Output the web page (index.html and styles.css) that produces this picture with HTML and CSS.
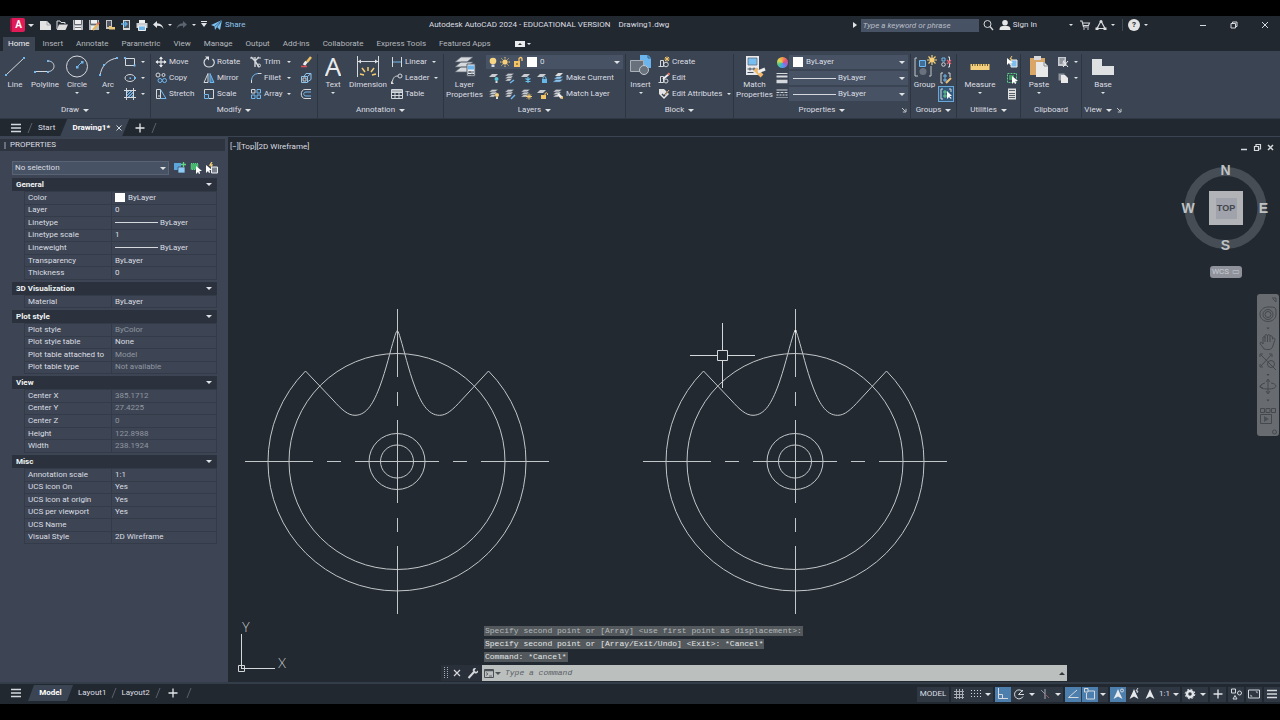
FILE: index.html
```html
<!DOCTYPE html>
<html lang="en">
<head>
<meta charset="utf-8">
<title>Autodesk AutoCAD 2024 - Drawing1.dwg</title>
<link rel="stylesheet" href="styles.css">
</head>
<body>
<svg class="defs" aria-hidden="true">
  <defs>
    <symbol id="stack" viewBox="0 0 12 12"><path d="M1 4l3-2.500h6L7 4zM1 6.500l3-2.500h5L7 6.500zM1 9l3-2.500h4L6 9z" fill="#c9cdd2" stroke="#4a515c" stroke-width=".4"/></symbol>
    <symbol id="menu" viewBox="0 0 12 12"><path d="M1 2.500h10M1 6h10M1 9.500h10" stroke="#d5d9de" stroke-width="1.600"/></symbol>
    <symbol id="plus" viewBox="0 0 12 12"><path d="M6 1.500v9M1.500 6h9" stroke="#e2e5e9" stroke-width="1.300"/></symbol>
    <symbol id="slash" viewBox="0 0 6 12"><path d="M5 1L1 11" stroke="#59616d" stroke-width="1"/></symbol>
    <symbol id="corner" viewBox="0 0 6 6"><path d="M1 1l3.500 3.500M5 1.800V5H1.800" stroke="#cdd1d6" stroke-width=".9"/></symbol>
    <symbol id="person" viewBox="0 0 12 12"><path d="M6 1l1.700 4L10.500 11 6 8.500 1.500 11 4.300 5z" fill="#e6e9ec"/></symbol>
    <g id="cam">
      <path d="M305.500 371A129 129 0 1 0 488.500 371"/>
      <circle cx="397" cy="461.500" r="108"/><circle cx="397" cy="461.500" r="28"/><circle cx="397" cy="461.500" r="16.500"/>
      <path d="M305.500 371L333 400C342 410 348 415.300 355 415.300C367 415.300 374 402 380 386C386 370 390.500 350 394 339Q396 331.500 397.300 330.500Q398.600 331.500 400.600 339C404 350 408.600 370 414.600 386C420.600 402 427.600 415.300 439.600 415.300C446.600 415.300 452.600 410 461.600 400L488.500 371"/>
      <path d="M245 461.500h68m14 0h14m14 0h84m14 0h14m14 0h68M397.500 309v68m0 15v14m0 14v83m0 15v14m0 14v68"/>
    </g>
  </defs>
</svg>

<header class="titlebar">
  <div class="quick">
    <button class="logo" aria-label="Application menu">A</button>
    <button class="tiny" aria-label="More"><i class="caret"></i></button>
    <button class="ic new" aria-label="New"><svg width="12" height="12"><path d="M0 2h7l4 4v5H0z" fill="#e3e3e3"/><path d="M7 2v4h4" stroke="#8b8f95" stroke-width=".7"/></svg></button>
    <button class="ic" aria-label="Open"><svg width="12" height="12"><path d="M1 10V2h3l1 1.500h4V5" stroke="#ddd"/><path d="M3 5.500h9L9.500 11H.8z" fill="#dedede"/></svg></button>
    <button class="ic" aria-label="Save"><svg width="12" height="12"><path d="M1 1h10v10H1z" fill="#b9bcc1"/><path d="M3 1h6v4H3zM3 7h6v4H3z" fill="#eee"/><path d="M2.500 1v4.500h7V1M3 8.500h6" stroke="#4e5560" stroke-width=".8"/></svg></button>
    <button class="ic" aria-label="Save as"><svg width="12" height="12"><path d="M1 1h10v10H1z" fill="#b9bcc1"/><path d="M3 1h6v3H3zM3 7h4v4H3z" fill="#eee"/><path d="M2.500 1v4.500h7V1" stroke="#4e5560" stroke-width=".8"/><path d="M5 11l5-6" stroke="#e8b55a" stroke-width="2"/><path d="M9.500 5.500l1.500-2" stroke="#e5674c" stroke-width="2"/></svg></button>
    <button class="ic" aria-label="Open from web"><svg width="12" height="12"><path d="M2 1h6v9H2z" fill="#c5c7ca"/><path d="M3 2h4v6H3z" fill="#545b66"/><path d="M5 10.500V7h2l1 1h3v2.500z" fill="#efc878"/></svg></button>
    <button class="ic" aria-label="Save to web"><svg width="12" height="12"><path d="M3 1h7v10H3z" fill="#d5d6d8"/><path d="M4 2h5v7H4z" fill="#49525f"/><path d="M1 5h5M4.500 2.500L7 5 4.500 7.500" stroke="#5fb0e8" stroke-width="1.300"/></svg></button>
    <button class="ic" aria-label="Plot"><svg width="12" height="12"><path d="M3 1h6v3H3z" fill="#eee"/><path d="M.5 4h11v5H.5z" fill="#c9ccd0"/><path d="M2.500 7h7v4.500h-7z" fill="#6fb6ec" stroke="#eee"/></svg></button>
    <button class="ic" aria-label="Undo"><svg width="12" height="12"><path d="M5 2L1 5.500 5 9V6.800C8 6.500 10 7.500 11.500 10 11 6.500 9 4.500 5 4.200z" fill="#e2e5e8"/></svg></button>
    <button class="tiny8" aria-label="Undo list"><i class="caret sm"></i></button>
    <button class="ic" aria-label="Redo"><svg width="12" height="12"><path d="M7 2l4 3.500L7 9V6.800C4 6.500 2 7.500.5 10 1 6.500 3 4.500 7 4.200z" fill="#5c6470"/></svg></button>
    <button class="tiny8" aria-label="Redo list"><i class="caret sm"></i></button>
    <button class="tiny" aria-label="Customize toolbar"><i class="caret bar"></i></button>
    <button class="share"><svg width="12" height="12"><path d="M0 6L11 1 9 11 6 8 4 11 3.500 7.500z" fill="#7cc0f0"/><path d="M3.500 7.500L11 1 6 8" stroke="#2a4f70" stroke-width=".7"/></svg>Share</button>
  </div>
  <h1 class="title"><span>Autodesk AutoCAD 2024 - EDUCATIONAL VERSION</span><span>Drawing1.dwg</span></h1>
  <div class="infocenter">
    <i class="caret right"></i>
    <input class="search" type="text" aria-label="Search" placeholder="Type a keyword or phrase">
    <button class="ic" aria-label="Search"><svg width="12" height="12"><circle cx="5.500" cy="5" r="3.500"/><path d="M8 7.500l3 3.500" stroke-width="1.300"/></svg></button>
    <button class="signin"><svg width="12" height="12"><circle cx="6" cy="3.700" r="2.800" fill="#e6e6e6"/><path d="M.5 11c0-4 2-4 5.500-4s5.500 0 5.500 4z" fill="#e6e6e6"/></svg>Sign In</button>
    <button class="tiny acct" aria-label="Account menu"><i class="caret sm"></i></button>
    <button class="ic" aria-label="App store"><svg width="12" height="12"><path d="M1 2h2l1.500 6H10M3.500 4H10.500L9.500 6.500H4" stroke-width="1.100"/><circle cx="5" cy="10" r=".8" fill="#ddd"/><circle cx="9" cy="10" r=".8" fill="#ddd"/></svg></button>
    <button class="ic" aria-label="Autodesk apps"><svg width="12" height="12"><path d="M6 2L2 9.500h8L6 2" stroke-width="1.200"/><circle cx="6" cy="2.500" r="1.500" fill="#ddd"/><path d="M.5 8.500h3v2.500h-3zM8.500 8.500h3v2.500h-3z" fill="#ddd"/></svg></button>
    <button class="tiny8" aria-label="Apps menu"><i class="caret sm"></i></button>
    <span class="vline"></span>
    <button class="help" aria-label="Help">?</button>
    <button class="tiny" aria-label="Help menu"><i class="caret sm"></i></button>
  </div>
  <div class="winbtns">
    <button aria-label="Minimize"><svg width="10" height="10"><path d="M2 5.500h6"/></svg></button>
    <button aria-label="Restore"><svg width="10" height="10"><path d="M2 3.500h4.500V8H2zM3.500 3V2H8v4.500H7"/></svg></button>
    <button aria-label="Close"><svg width="10" height="10"><path d="M2 2l6 6M8 2L2 8"/></svg></button>
  </div>
</header>

<nav class="tabs">
  <button class="active">Home</button><button>Insert</button><button>Annotate</button><button>Parametric</button><button>View</button><button>Manage</button><button>Output</button><button>Add-ins</button><button>Collaborate</button><button>Express Tools</button><button>Featured Apps</button>
  <button class="mini" aria-label="Minimize ribbon"><svg width="10" height="6"><path d="M0 0h10v6H0z" fill="#e9ebed"/><path d="M3 4l2-2 2 2z" fill="#333"/></svg><i class="caret sm"></i></button>
</nav>

<main class="ribbon">
  <section class="panel draw">
    <div class="body">
      <button class="big"><svg width="24" height="24"><path d="M3 21L21 4"/><path d="M2 20h2v2H2zM20 3h2v2h-2z" fill="#71b8f0"/></svg><span>Line</span></button>
      <button class="big"><svg width="24" height="24"><path d="M3 17.500h12M15 7c8 0 8 10.500 0 10.500"/><path d="M1 17h2v2H1zM14 6h2v2h-2zM14 17h2v2h-2z" fill="#71b8f0"/></svg><span>Polyline</span></button>
      <button class="big"><svg width="24" height="24"><circle cx="12" cy="12.500" r="10.500"/><path d="M12 13l5-5" stroke="#71b8f0"/><path d="M11 12h2.500v2.500H11zM16 7h2.500v2.500H16z" fill="#71b8f0"/></svg><span>Circle</span><i class="caret sm"></i></button>
      <button class="big"><svg width="24" height="24"><path d="M4 22C5 12 12 5 22 4"/><path d="M3 20h2v2H3zM7 10h2v2H7zM20 3h2v2h-2z" fill="#71b8f0"/></svg><span>Arc</span><i class="caret sm"></i></button>
      <div class="stack">
        <button aria-label="Rectangle"><svg width="12" height="12"><path d="M1.500 2.500h9v7h-9z"/><path d="M0 1h2v2H0zM9.500 8.500h2v2h-2z" fill="#71b8f0"/></svg><i class="caret sm"></i></button>
        <button aria-label="Ellipse"><svg width="12" height="12"><ellipse cx="6" cy="6" rx="5" ry="3.500"/><path d="M5.500 5.500h1.500v1.500H5.500zM10 5h2v2h-2z" fill="#71b8f0"/></svg><i class="caret sm"></i></button>
        <button aria-label="Hatch"><svg width="12" height="12"><path d="M2.500 0v12M9.500 0v12M0 2.500h12M0 9.500h12"/><path d="M3 3h6v6H3z" fill="#6aa5d6"/><path d="M3 6l3-3M3 9l6-6M6 9l3-3" stroke="#36404d"/></svg><i class="caret sm"></i></button>
      </div>
    </div>
    <button class="name">Draw<i class="caret"></i></button>
  </section>

  <section class="panel modify">
    <div class="body">
      <div class="stack">
        <button><svg width="12" height="12"><path d="M6 1v10M1 6h10" stroke-width="1.300"/><path d="M4 3l2-2.500L8 3zM4 9l2 2.500L8 9zM3 4L.5 6 3 8zM9 4l2.500 2L9 8z" fill="#e5e8eb"/></svg>Move</button>
        <button><svg width="12" height="12"><circle cx="3" cy="3" r="2"/><circle cx="8.500" cy="3" r="1.500"/><circle cx="5" cy="8.500" r="2" stroke="#71b8f0"/><circle cx="9.500" cy="8.500" r="2" stroke="#71b8f0"/></svg>Copy</button>
        <button><svg width="12" height="12"><path d="M1.500 1.500h4v9h-4z"/><path d="M5.500 1.500L11 10.500H5.500" stroke="#71b8f0"/><path d="M3 8h3"/></svg>Stretch</button>
      </div>
      <div class="stack">
        <button><svg width="12" height="12"><path d="M4 2C-1 5 1 11 6 11s7-5 3.500-8" stroke-width="1.200"/><path d="M2 .5h4v4z" fill="#e2e5e8"/></svg>Rotate</button>
        <button><svg width="12" height="12"><path d="M5 1.500V10.500H1z"/><path d="M7 1.500V10.500h4z" fill="#477aa7" stroke="#71b8f0"/></svg>Mirror</button>
        <button><svg width="12" height="12"><path d="M1.500 6V1.500h9v9H6"/><path d="M1.500 6.500h4v4h-4z" stroke="#71b8f0"/></svg>Scale</button>
      </div>
      <div class="stack carets">
        <button><svg width="12" height="12"><path d="M1 1l4 4M5 1v10M9 1L5 5l4 6" stroke-width="1.400"/><circle cx="9" cy="9.500" r="1.500"/><path d="M0 2h4M7 2h4" stroke="#c8cbd0"/></svg>Trim<i class="caret sm"></i></button>
        <button><svg width="12" height="12"><path d="M1.500 11V8" /><path d="M1.500 8C2 4 4 2 8 1.500" stroke="#71b8f0"/><path d="M8 1.500h3.500"/></svg>Fillet<i class="caret sm"></i></button>
        <button><svg width="12" height="12"><path d="M1.500 1.500h3.500V5H1.500z"/><path d="M7 1.500h3.500V5H7zM1.500 7H5v3.500H1.500zM7 7h3.500v3.500H7z" stroke="#71b8f0"/></svg>Array<i class="caret sm"></i></button>
      </div>
      <div class="stack">
        <button aria-label="Erase"><svg width="12" height="12"><path d="M11 1L7 6" stroke="#f0c064" stroke-width="2.500"/><path d="M6.500 5.500L4 9" stroke="#eee" stroke-width="3"/><path d="M1 10.500h6" stroke="#e05050" stroke-width="1.500"/></svg></button>
        <button aria-label="Explode"><svg width="12" height="12"><path d="M1.500 4.500h6v6h-6zM4 4.500l2-3h5v6l-3 2M7.500 4.500l3.500-3" stroke="#8fc4ee"/><path d="M3 6h3v3H3z" stroke="#c7cbd0"/></svg></button>
        <button aria-label="Offset"><svg width="12" height="12"><path d="M11 1.500H5c-5 0-5 9 0 9h6"/><path d="M11 4H6C3 4 3 8 6 8h5" stroke="#71b8f0"/></svg></button>
      </div>
    </div>
    <button class="name">Modify<i class="caret"></i></button>
  </section>

  <section class="panel annotation">
    <div class="body">
      <button class="big"><b class="glyph">A</b><span>Text</span><i class="caret sm"></i></button>
      <button class="big"><svg width="24" height="24"><path d="M1.500 2v21M22.500 2v21M2 7.500h20"/><path d="M2 7.500l3-2v4zM22 7.500l-3-2v4z" fill="#ddd"/><path d="M12 13v4M6 14l3 4M18 14l-3 4M4 20l4 1M20 20l-4 1" stroke="#f3cd72" stroke-width="1.500"/></svg><span>Dimension</span></button>
      <div class="stack">
        <button><svg width="12" height="12"><path d="M1.500 1v10M10.500 1v10"/><path d="M2 6h8" stroke="#71b8f0"/></svg>Linear<i class="caret sm"></i></button>
        <button><svg width="12" height="12"><path d="M1 11c1-5 2-7 6-7"/><circle cx="9" cy="4" r="2"/><path d="M0 9v3h3z" fill="#ddd"/></svg>Leader<i class="caret sm"></i></button>
        <button><svg width="12" height="12"><path d="M.5 1.500h11v9H.5zM.5 4.500h11M.5 7.500h11M4 4v6M8 4v6"/><path d="M1 3h10" stroke-width="1.500"/></svg>Table</button>
      </div>
    </div>
    <button class="name">Annotation<i class="caret"></i></button>
  </section>

  <section class="panel layers">
    <div class="body">
      <button class="big"><svg width="24" height="24"><path d="M2 8l6-5h12l-6 5zM2 13l6-5h12l-6 5zM2 18l6-5h12l-6 5z" fill="#d5d8dc" stroke="#59616d" stroke-width=".7"/><path d="M14 10h8v12h-8z" fill="#e9ebee" stroke="#56606c"/><path d="M15 11.500h6v4h-6z" fill="#6bb4ec"/><path d="M15 18h6M15 20.500h6M17 17v2M19 19.500v2" stroke="#46505c"/></svg><span>Layer<br>Properties</span></button>
      <div class="rows">
        <div class="combo">
          <svg width="46" height="12"><circle cx="6" cy="5" r="3.300" fill="#f6d684"/><path d="M4.500 8.500h3v2.500h-3z" fill="#d7d9dc"/><circle cx="18" cy="6" r="2.600" fill="#f6cf78"/><path d="M18 1v1.500M18 9.500V11M13 6h1.500M21.500 6H23M14.500 2.500l1 1M20.500 8.500l1 1M21.500 2.500l-1 1M15.500 8.500l-1 1" stroke="#f6cf78"/><path d="M27 5h6v6h-6z" fill="#f3c467"/><path d="M32 5V2.500q2-2 3 0V5" stroke="#f3c467" stroke-width="1.300"/><path d="M30 7v2" stroke="#5c4a20"/></svg>
          <span class="swatch"></span>
          <select aria-label="Layer"><option>0</option></select><i class="caret"></i>
        </div>
        <div class="irow">
          <button aria-label="Off"><svg width="12" height="12"><path d="M1 5l3-3h6L7 5z" fill="#c9cdd2"/><circle cx="8.500" cy="7" r="2" fill="#59c8d8"/><path d="M7.500 9h2v2h-2z" fill="#ddd"/></svg></button>
          <button aria-label="Isolate"><svg width="12" height="12"><use href="#stack"/><path d="M6 11l4-3" stroke="#71b8f0" stroke-width="1.500"/></svg></button>
          <button aria-label="Freeze"><svg width="12" height="12"><path d="M1 5l3-3h6L7 5z" fill="#c9cdd2"/><path d="M8 5v6M5.500 6.500l5 3M10.500 6.500l-5 3" stroke="#67c1e8" stroke-width="1.200"/></svg></button>
          <button aria-label="Lock"><svg width="12" height="12"><path d="M1 5l3-3h6L7 5z" fill="#c9cdd2"/><path d="M6 7h5v4H6z" fill="#67b8e8"/><path d="M7 7V5.500q1.500-1.500 3 0V7" stroke="#67b8e8"/></svg></button>
          <button><svg width="12" height="12"><path d="M3 4l3-3h5L8 4z" fill="#ddd"/><path d="M2 7l3-2.500h6L8 7zM1 10l3-2.500h7L8 10z" fill="#8cc5ee" stroke="#49647c" stroke-width=".5"/></svg>Make Current</button>
        </div>
        <div class="irow">
          <button aria-label="Turn all on"><svg width="12" height="12"><use href="#stack"/><circle cx="9" cy="7" r="2" fill="#f6cf78"/><path d="M8 9h2v2H8z" fill="#ddd"/></svg></button>
          <button aria-label="Unisolate"><svg width="12" height="12"><use href="#stack"/><path d="M7 11l4-4" stroke="#71b8f0" stroke-width="1.500"/></svg></button>
          <button aria-label="Thaw"><svg width="12" height="12"><use href="#stack"/><path d="M9 5.500v6M6 8.500h6M7 6.500l4 4M11 6.500l-4 4" stroke="#f6cf78"/></svg></button>
          <button aria-label="Unlock"><svg width="12" height="12"><path d="M1 5l3-3h6L7 5z" fill="#c9cdd2"/><path d="M5 7h5v4H5z" fill="#f3c467"/><path d="M9 7V5.500q1.500-1.500 2.500 0V7" stroke="#f3c467"/></svg></button>
          <button><svg width="12" height="12"><use href="#stack"/><path d="M6 6l4 4" stroke="#eee" stroke-width="2.500"/><path d="M8 10l3-2v3z" fill="#f3c467"/></svg>Match Layer</button>
        </div>
      </div>
    </div>
    <button class="name">Layers<i class="caret"></i></button>
  </section>

  <section class="panel block">
    <div class="body">
      <button class="big"><svg width="24" height="24"><path d="M11 1h8l3 3v10H11z" fill="#6bb4ec"/><path d="M19 1v3h3" stroke="#2d5e88"/><path d="M1.500 6.500h13v11h-13z" fill="#69717d" stroke="#aab0b8"/><circle cx="15" cy="16" r="4.500" fill="#69717d" stroke="#c3c8ce"/></svg><span>Insert</span><i class="caret sm"></i></button>
      <div class="stack">
        <button><svg width="12" height="12"><path d="M.5 10.500h5v-6h-3v6"/><circle cx="8" cy="8.500" r="2.300"/><path d="M9 .5v5M6.500 3h5M7 1l4 4M11 1L7 5" stroke="#f3c467"/></svg>Create</button>
        <button><svg width="12" height="12"><path d="M.5 10.500h5v-6h-3v6"/><circle cx="8" cy="9" r="2"/><path d="M5 7l6-5" stroke="#eee" stroke-width="1.800"/><path d="M10 3l1.500-2" stroke="#e87460" stroke-width="2"/></svg>Edit</button>
        <button><svg width="12" height="12"><path d="M1 1h5l5 5-5 5-5-5z" fill="#e4e4e4"/><path d="M4 6l2 2 5-6" stroke="#3b4453" stroke-width="1.500"/><path d="M7 7l4-5" stroke="#e8b070"/></svg>Edit Attributes<i class="caret sm"></i></button>
      </div>
    </div>
    <button class="name">Block<i class="caret"></i></button>
  </section>

  <section class="panel props">
    <div class="body">
      <button class="big"><svg width="24" height="24"><path d="M3 2h13v19H3z" fill="#e8e9ec"/><path d="M5 4h9v7H5z" fill="#78bdf0" stroke="#56616d" stroke-width=".7"/><path d="M4.500 15h10M4.500 18.500h6M7 13.500v3M11 13.500v3" stroke="#46505c"/><path d="M12 15l7 7" stroke="#f0b868" stroke-width="4"/><path d="M15 18l7-3" stroke="#eee" stroke-width="3"/></svg><span>Match<br>Properties</span></button>
      <div class="stack center">
        <button aria-label="Object color"><span class="wheel"></span></button>
        <button aria-label="Lineweight"><svg width="12" height="12"><path d="M.5 1.500h11"/><path d="M.5 4.500h11" stroke-width="2"/><path d="M.5 9.500h11" stroke-width="3.500"/></svg></button>
        <button aria-label="Linetype"><svg width="12" height="12"><path d="M.5 2h11"/><path d="M.5 4.500h11" stroke-dasharray="3 1"/><path d="M.5 7h11" stroke-dasharray="2 1"/><path d="M.5 9.500h11" stroke-dasharray="1 1"/></svg></button>
      </div>
      <div class="rows">
        <div class="combo"><span class="swatch"></span><select aria-label="Color"><option>ByLayer</option></select><i class="caret"></i></div>
        <div class="combo"><span class="rule"></span><select aria-label="Lineweight"><option>ByLayer</option></select><i class="caret"></i></div>
        <div class="combo"><span class="rule"></span><select aria-label="Linetype"><option>ByLayer</option></select><i class="caret"></i></div>
      </div>
    </div>
    <button class="name">Properties<i class="caret"></i><svg class="launch" width="6" height="6"><use href="#corner"/></svg></button>
  </section>

  <section class="panel groups">
    <div class="body">
      <button class="big"><svg width="24" height="24"><path d="M4 4H2v18h3M16 4h1M16 22h2V12" stroke="#c2c7cd"/><path d="M6.500 6.500h6v6h-6z" fill="#3f6e96" stroke="#71b8f0"/><circle cx="10" cy="17.500" r="3.500" fill="#6a727e"/><path d="M19 1v10M14 6h10M15.500 2.500l7 7M22.500 2.500l-7 7" stroke="#f6cf78" stroke-width="1.200"/><circle cx="19" cy="6" r="2.300" fill="#f6cf78"/></svg><span>Group</span></button>
      <div class="stack center">
        <button aria-label="Ungroup"><svg width="12" height="12"><path d="M2 2h3v3H2z" stroke="#71b8f0"/><circle cx="3.500" cy="8.500" r="1.800"/><path d="M8 1h1.500v10H8"/><path d="M7 4l4 4M11 4L7 8" stroke="#e5606c" stroke-width="1.200"/></svg></button>
        <button aria-label="Group edit"><svg width="12" height="12"><path d="M3 1H1v10h2M8 1h2v4"/><path d="M4 3h2v2H4zM4 7h2v2H4z" stroke="#71b8f0"/><path d="M6 11l5-5" stroke="#f0c27a" stroke-width="2"/></svg></button>
        <button class="on" aria-label="Group selection"><svg width="12" height="12"><path d="M3 1H1v10h2M9 1h2v3"/><path d="M4 3h2v2H4zM4 7h2v2H4z" stroke="#5fd08b"/><path d="M7 3v8l2-2 2 2 .5-1L9.500 8H12z" fill="#fff"/></svg></button>
      </div>
    </div>
    <button class="name">Groups<i class="caret"></i></button>
  </section>

  <section class="panel utilities">
    <div class="body">
      <button class="big"><svg width="24" height="24"><path d="M2.500 10h19v6h-19z" fill="#f3cf7d"/><path d="M4.500 10v2M7 10v2M9.500 10v2M12 10v2M14.500 10v2M17 10v2M19.500 10v2" stroke="#6a5a34"/></svg><span>Measure</span><i class="caret sm"></i></button>
      <div class="stack center">
        <button aria-label="Quick select"><svg width="12" height="12"><path d="M5 4h6v7H5z" fill="#7fbdec" stroke="#eee"/><path d="M1 2v7l2-2 1 2 1-.5L4.500 7H7z" fill="#fff"/><path d="M6 0L4 3h2L5 5" stroke="#f6cf78"/></svg></button>
        <button aria-label="Select all"><svg width="12" height="12"><path d="M1.500 1.500h9v9h-9z" stroke="#5fd08b" stroke-dasharray="2 1"/><path d="M3 3h5v5H3z" fill="#3f9a62"/><path d="M6 4v8l2-2 1 2 1-.5L9.500 9H12z" fill="#fff"/></svg></button>
        <button aria-label="Calculator"><svg width="12" height="12"><path d="M2 .5h8v11H2z" fill="#dedede"/><path d="M3 2.500h6M3 5.500h6M3 7.500h6M3 9.500h6" stroke="#59616d"/></svg></button>
      </div>
    </div>
    <button class="name">Utilities<i class="caret"></i></button>
  </section>

  <section class="panel clipboard">
    <div class="body">
      <button class="big"><svg width="24" height="24"><path d="M3 4h15v17H3z" fill="#d9a668"/><path d="M7 2h7v4H7z" fill="#d7d9dc"/><path d="M9 8h8l4 4v11H9z" fill="#e9e9e9"/><path d="M17 8v4h4" stroke="#8d9197"/></svg><span>Paste</span><i class="caret sm"></i></button>
      <div class="stack clips">
        <button aria-label="Cut"><svg width="12" height="12"><path d="M1 1h8v9H1z" fill="#c7cad0"/><path d="M2.500 3h5M2.500 5h4M2.500 7h3" stroke="#59616d"/><path d="M6 5l5 6M11 5l-5 6" stroke="#eee"/></svg><i class="caret sm"></i></button>
        <button aria-label="Copy clip"><svg width="12" height="12"><path d="M1.500 1.500h6v7h-6z" fill="#8f959e"/><path d="M4 3h4l3 3v5H4z" fill="#e9e9e9"/></svg><i class="caret sm"></i></button>
      </div>
    </div>
    <div class="name">Clipboard</div>
  </section>

  <section class="panel view">
    <div class="body">
      <button class="big"><svg width="24" height="24"><path d="M1 5h10v7h12v9H1z" fill="#dfe0e2"/></svg><span>Base</span><i class="caret sm"></i></button>
    </div>
    <button class="name">View<i class="caret"></i><svg width="6" height="6"><use href="#corner"/></svg></button>
  </section>
</main>

<nav class="files">
  <button class="ic" aria-label="Menu"><svg width="12" height="12"><use href="#menu"/></svg></button>
  <svg class="slash" width="6" height="12"><use href="#slash"/></svg>
  <button class="start">Start</button>
  <button class="doc">Drawing1*<svg width="8" height="8"><path d="M1.500 1.500l5 5M6.500 1.500l-5 5"/></svg></button>
  <button class="ic add" aria-label="New drawing"><svg width="12" height="12"><use href="#plus"/></svg></button>
  <svg width="6" height="12"><use href="#slash"/></svg>
</nav>

<div class="work">
  <aside class="palette">
    <h2>PROPERTIES</h2>
    <div class="pick">
      <div class="combo"><select aria-label="Selection"><option>No selection</option></select><i class="caret"></i></div>
      <button aria-label="Toggle PICKADD"><svg width="12" height="12"><path d="M0 1h7v7H0z" fill="#5aa6dd"/><path d="M4 5h7v6H4z" fill="#8dcaf5" stroke="#3b4453" stroke-width=".7"/><path d="M9.500 0v5M7 2.500h5" stroke="#5fd97f" stroke-width="1.300"/></svg></button>
      <button aria-label="Select objects"><svg width="12" height="12"><path d="M1 1.500h7v6H1z" fill="#49b86f" stroke="#5fd08b" stroke-dasharray="1 1"/><path d="M6 4v8l2-2 1 2 1-.5L9.500 9H12z" fill="#fff"/></svg></button>
      <button aria-label="Quick select"><svg width="12" height="12"><path d="M5.500 5h6v6h-6z" fill="#7a828e" stroke="#eee"/><path d="M0 3v8l2-2 1 2 1-.5L3.500 8H6z" fill="#fff"/><path d="M6 0L4 3h2L5 5" stroke="#f6cf78" stroke-width="1.300"/></svg></button>
    </div>
    <h3>General<i class="caret"></i></h3>
    <table class="r7">
      <tr><th>Color</th><td><span class="swatch"></span>ByLayer</td></tr>
      <tr><th>Layer</th><td>0</td></tr>
      <tr><th>Linetype</th><td><span class="rule"></span>ByLayer</td></tr>
      <tr><th>Linetype scale</th><td>1</td></tr>
      <tr><th>Lineweight</th><td><span class="rule"></span>ByLayer</td></tr>
      <tr><th>Transparency</th><td>ByLayer</td></tr>
      <tr><th>Thickness</th><td>0</td></tr>
    </table>
    <h3>3D Visualization<i class="caret"></i></h3>
    <table class="r1"><tr><th>Material</th><td>ByLayer</td></tr></table>
    <h3>Plot style<i class="caret"></i></h3>
    <table class="r4">
      <tr><th>Plot style</th><td class="dim">ByColor</td></tr>
      <tr><th>Plot style table</th><td>None</td></tr>
      <tr><th>Plot table attached to</th><td class="dim">Model</td></tr>
      <tr><th>Plot table type</th><td class="dim">Not available</td></tr>
    </table>
    <h3>View<i class="caret"></i></h3>
    <table class="r5">
      <tr><th>Center X</th><td class="dim">385.1712</td></tr>
      <tr><th>Center Y</th><td class="dim">27.4225</td></tr>
      <tr><th>Center Z</th><td class="dim">0</td></tr>
      <tr><th>Height</th><td class="dim">122.8988</td></tr>
      <tr><th>Width</th><td class="dim">238.1924</td></tr>
    </table>
    <h3>Misc<i class="caret"></i></h3>
    <table class="r6">
      <tr><th>Annotation scale</th><td>1:1</td></tr>
      <tr><th>UCS icon On</th><td>Yes</td></tr>
      <tr><th>UCS icon at origin</th><td>Yes</td></tr>
      <tr><th>UCS per viewport</th><td>Yes</td></tr>
      <tr><th>UCS Name</th><td></td></tr>
      <tr><th>Visual Style</th><td>2D Wireframe</td></tr>
    </table>
  </aside>

  <div class="canvas">
    <svg class="drawing" width="1052" height="545" viewBox="228 137 1052 545">
      <g stroke="#c3c7ca" stroke-width="1">
        <use href="#cam"/><use href="#cam" x="398"/>
      </g>
      <path d="M794.500 330h2v2h-2z" fill="#fff" stroke="none"/>
      <path d="M690 355.500h27M728 355.500h27M722.500 323v27M722.500 361v27M717.500 350.500h10v10h-10z" stroke="#d5d8da"/>
    </svg>
    <svg class="ucs" width="60" height="60"><path d="M5.500 15v34M5 49.500h34M2.500 46.500h6v6h-6z" stroke="#d5d8da"/><text x="6" y="13">Y</text><text x="42" y="49">X</text></svg>
    <div class="viewhead">
      <span>[−][Top][2D Wireframe]</span>
      <div>
        <button aria-label="Minimize drawing"><svg width="9" height="9"><path d="M1 6.500h6" stroke-width="1.500"/></svg></button>
        <button aria-label="Restore drawing"><svg width="9" height="9"><path d="M1.500 3.500h4v4h-4zM3 3V1.500h4.500V6H6" stroke-width="1.200"/></svg></button>
        <button aria-label="Close drawing"><svg width="9" height="9"><path d="M2 2l5 5M7 2L2 7" stroke-width="1.500"/></svg></button>
      </div>
    </div>
    <div class="cube">
      <svg width="90" height="90"><circle cx="44.500" cy="45" r="36.500" stroke="#474d54" stroke-width="9"/><path d="M28 28h34v34H28z" fill="#b1b3b7"/><path d="M35 35h21v21H35z" fill="#a0a3ab"/>
        <text x="44.500" y="12">N</text><text x="44.500" y="87">S</text><text x="7" y="50">W</text><text x="82.500" y="50">E</text><text class="top" x="45" y="48">TOP</text></svg>
      <button class="wcs">WCS<span>▭</span></button>
    </div>
    <svg class="navbar" width="22" height="142">
      <path d="M15 4h4v4M16 5l3 3"/>
      <path d="M11 13c8 0 8 0 8 7 0 10-16 10-16 0 0-4 4-7 8-7z"/><circle cx="11" cy="20.500" r="5"/><circle cx="11" cy="20.500" r="3"/>
      <path d="M9.500 33.500h3l-1.500 2z" fill="#3f4449"/>
      <path d="M7 55c-2-3-4-5-4-6s2-1 3 1v-6c0-2 2-2 2 0v-2c0-2 2-2 2.500 0 .5-2 2.500-2 2.500 0 1-1 2.500 0 2.500 2v1c2-2 3 0 2 2l-2 6c-1 3-5 3-8.500 2M8 44v4M10.500 42v6M13 42v6"/>
      <path d="M4 61l12 12M14 61L4 72M3 60h3M3 60v3M15 60h-3M15 60v3M3 73h3M3 73v-3"/><circle cx="14" cy="70" r="3.500"/><path d="M16 73l3 3"/>
      <path d="M9.500 80h3l-1.500 2z" fill="#3f4449"/>
      <path d="M11 86v13M9 88l2-3 2 3M9 97l2 3 2-3M8 89c-7 2-7 6 3 6s10-5 3-6M5 90l-2 3 3 1"/>
      <path d="M9.500 105.500h3l-1.500 2z" fill="#3f4449"/>
      <path d="M3.500 114.500h4v4h-4zM9 114.500h4v4H9zM14.500 114.500h4v4h-4zM3.500 120.500h11v9h-11z"/><path d="M7 122l5 3-5 3z" fill="#4a4f55"/>
      <circle cx="17.500" cy="138" r="2"/>
    </svg>
    <div class="command">
      <ul><li>Specify second point or [Array] &lt;use first point as displacement&gt;:</li><li>Specify second point or [Array/Exit/Undo] &lt;Exit&gt;: *Cancel*</li><li>Command: *Cancel*</li></ul>
      <div class="cmdbar">
        <svg class="grip" width="6" height="12"><path d="M1.500 0v12M4.500 0v12" stroke="#a8adb3" stroke-dasharray="1 1"/></svg>
        <button aria-label="Close command line"><svg width="8" height="8"><path d="M1 1l6 6M7 1L1 7" stroke-width="1.200"/></svg></button>
        <button aria-label="Customize"><svg width="12" height="12"><path d="M1.500 11L7 5" stroke-width="2"/><path d="M11 3.500L9 5 7.500 3.500 9 1.200C6.500.5 5 2.500 6 4.500L8 6.500c2 .5 3.500-1 3-3z" fill="#d5d8dc" stroke="none"/></svg></button>
        <div class="entry">
          <svg width="10" height="9"><path d="M.5.5h9v8h-9z"/><path d="M.5 1.500h9" stroke-width="1.500"/><path d="M2 3.500l2 1.500-2 1.500M5 7h3" stroke-width=".8"/></svg><i class="caret"></i>
          <input type="text" aria-label="Command" placeholder="Type a command"><i class="caret up"></i>
        </div>
      </div>
    </div>
  </div>
</div>

<footer class="status">
  <nav class="layouts">
    <button class="ic" aria-label="Layout menu"><svg width="12" height="12"><use href="#menu"/></svg></button>
    <button class="model">Model</button>
    <button>Layout1</button><svg width="6" height="12"><use href="#slash"/></svg>
    <button>Layout2</button><svg width="6" height="12"><use href="#slash"/></svg>
    <button class="ic" aria-label="New layout"><svg width="12" height="12"><use href="#plus"/></svg></button><svg width="6" height="12"><use href="#slash"/></svg>
  </nav>
  <div class="toggles">
    <button class="text">MODEL</button>
    <div class="set"><button aria-label="Grid"><svg width="12" height="12"><path d="M3.500 1v10M6.500 1v10M9.500 1v10M1 3.500h10M1 6.500h10M1 9.500h10" stroke="#a9aeb5"/></svg></button><button aria-label="Snap"><svg width="12" height="12"><path d="M2.500 2v9M5.500 2v9M8.500 2v9M11.500 2v9" stroke-dasharray="1 2"/></svg></button><button class="c" aria-label="Snap settings"><i class="caret"></i></button></div>
    <div class="set"><button class="on" aria-label="Ortho"><svg width="12" height="12"><path d="M1.500 0v10.500H11M1.500 6.500h4v4"/></svg></button><button aria-label="Polar"><svg width="12" height="12"><path d="M9.500 3.500A4.500 4.500 0 1 0 10 8.500M5.500 6.500L10 2M5.500 6.500h5.500"/></svg></button><button class="c" aria-label="Polar settings"><i class="caret"></i></button><button aria-label="Isodraft"><svg width="12" height="12"><path d="M6 1v10" stroke="#a9aeb5"/><path d="M2 2l4 4" stroke="#8e959e"/><path d="M6 6l4 4" stroke="#9a5563"/></svg></button><button class="c" aria-label="Isodraft settings"><i class="caret"></i></button></div>
    <div class="set"><button class="on" aria-label="Snap tracking"><svg width="12" height="12"><path d="M10 2L1.500 9.500H11.500"/></svg></button><button class="on" aria-label="Object snap"><svg width="12" height="12"><path d="M4 3h6.500v8h-8V5"/><path d="M.5.5h3.500v3.500H.5z"/></svg></button><button class="c" aria-label="Object snap settings"><i class="caret"></i></button></div>
    <div class="set"><button class="on" aria-label="Annotation visibility"><svg width="12" height="12"><use href="#person"/><circle cx="10" cy="2.500" r="1.500"/></svg></button><button aria-label="Auto scale"><svg width="12" height="12"><use href="#person"/><path d="M10 0L8 3h2L9 5"/></svg></button><button aria-label="Annotation scale icon"><svg width="12" height="12"><use href="#person"/></svg></button><button class="scale">1:1<i class="caret"></i></button></div>
    <div class="set"><button aria-label="Workspace"><svg width="12" height="12"><circle cx="6" cy="6" r="3" stroke-width="2.500" stroke="#e2e5e8"/><circle cx="6" cy="6" r="4.800" stroke="#e2e5e8" stroke-dasharray="2 1.770"/></svg></button><button class="c" aria-label="Workspace menu"><i class="caret"></i></button></div>
    <div class="set"><button aria-label="Annotation monitor"><svg width="12" height="12"><use href="#plus"/></svg></button></div>
    <div class="set"><button aria-label="Isolate objects"><svg width="12" height="12"><path d="M1.500 1h4v4h-4zM3 11l2-3.500L7 11z"/><circle cx="9.500" cy="5" r="2"/></svg></button></div>
    <div class="set"><button aria-label="Clean screen"><svg width="12" height="12"><path d="M.5 2h11v8H.5z"/><path d="M2.500 8.500v-2l2 2zM9.500 3.500v2l-2-2z" fill="#ddd"/></svg></button></div>
    <div class="set"><button aria-label="Customization"><svg width="12" height="12"><use href="#menu"/></svg></button></div>
  </div>
</footer>
</body>
</html>
```
FILE: styles.css
```css
* { box-sizing: border-box; }
:root {
  --dark: #222830;
  --panel: #3b4453;
  --field: #475264;
  --line: #2b323d;
  --text: #dcdee2;
}
html { background: #000; }
body {
  margin: 0;
  padding: 16px 0;
  height: 100vh;
  display: flex;
  flex-direction: column;
  overflow: hidden;
  background: #000;
  color: var(--text);
  font: 8px/10px Roboto, "Noto Sans", sans-serif;
}
button, select, input { font: inherit; color: inherit; background: none; border: 0; padding: 0; margin: 0; border-radius: 0; }
button { display: flex; align-items: center; justify-content: center; white-space: nowrap; }
select { appearance: none; flex: 1; min-width: 0; }
svg { display: block; flex: none; fill: none; stroke: #d5d8dc; }
svg [fill]:not([stroke]) { stroke: none; }
.defs { position: absolute; width: 0; height: 0; }

.caret { flex: none; width: 0; height: 0; border: 3px solid transparent; border-top-color: #e0e3e6; border-bottom: 0; }
.caret.sm { border-width: 2px; border-bottom: 0; }
.caret.up { border-top: 0; border-bottom: 3px solid #33383d; }
.caret.right { border: 3px solid transparent; border-left: 4px solid #e0e3e6; border-right: 0; }
.caret.bar { position: relative; border-top-width: 4px; }
.caret.bar::before { content: ""; position: absolute; left: -3px; top: -6px; width: 6px; height: 1px; background: #e0e3e6; }

/* title bar */
.titlebar { flex: none; height: 18px; display: flex; align-items: center; background: var(--dark); }
.quick, .infocenter, .winbtns { display: flex; align-items: center; }
.ic { width: 16px; height: 16px; }
.tiny { width: 12px; height: 16px; }
.tiny8 { width: 8px; height: 16px; }
.logo { width: 15px; height: 14px; margin-left: 10px; background: #e11b58; border-left: 2px solid #9d1440; border-radius: 2px; color: #fff; font-weight: 700; font-size: 10px; }
.new { margin-left: 1px; }
.share { gap: 2px; padding-left: 1px; color: #8fc6ee; }
.title { flex: 1; display: flex; justify-content: center; gap: 8px; margin: 0; font-size: 8px; font-weight: 400; white-space: nowrap; }
.search { width: 118px; height: 13px; margin: 0 1px 0 4px; padding: 0 2px; background: var(--field); font-style: italic; }
.search::placeholder { color: #b9bec6; opacity: 1; }
.signin { gap: 2px; margin-left: 3px; }
.acct { margin-left: 28px; }
.vline { width: 1px; height: 12px; margin: 0 5px; background: #414955; }
.help { width: 12px; height: 12px; border-radius: 6px; background: #e3e3e3; color: #222830; font-weight: 700; }
.winbtns { margin-left: 35px; }
.winbtns button { width: 31px; height: 16px; }

/* ribbon tabs */
.tabs { flex: none; display: flex; gap: 3px; padding: 3px 3px 0; background: var(--dark); }
.tabs button { height: 14px; padding: 0 5px; color: #b4b8be; }
.tabs .active { background: var(--panel); color: #f0f2f4; }
.tabs .mini { gap: 2px; margin-left: 11px; }

/* ribbon */
.ribbon { flex: none; display: flex; height: 68px; padding-top: 3px; background: var(--panel); border-bottom: 1px solid #303845; }
.panel { display: flex; flex-direction: column; border-right: 1px solid #2d3541; }
.view { border: 0; }
.body { flex: none; display: grid; height: 48px; }
.name { flex: none; height: 16px; gap: 4px; display: flex; align-items: center; justify-content: center; position: relative; }
.launch { position: absolute; right: 3px; }
.draw .body { grid-template-columns: 30px 30px 34px 28px 28px; }
.modify .body { grid-template-columns: 48px 47px 50px 17px; padding-left: 4px; }
.annotation .body { grid-template-columns: 30px 40px 55px; }
.layers .body { grid-template-columns: 41px 138px; padding-right: 2px; }
.block .body { grid-template-columns: 29px 78px; }
.props .body { grid-template-columns: 41px 14px 119px; padding-right: 2px; }
.groups .body { grid-template-columns: 27px 16px; padding-right: 2px; }
.utilities .body { grid-template-columns: 46px 17px; }
.clipboard .body { grid-template-columns: 36px 24px; }
.view .body { grid-template-columns: 42px; }
.big { flex-direction: column; justify-content: flex-start; line-height: 10px; }
.big > svg, .glyph { height: 24px; margin-bottom: 2px; }
.big .caret { margin-top: 2px; }
.glyph { overflow: hidden; font: 26px/24px "Noto Sans", sans-serif; color: #e8eaec; }
.stack { display: grid; grid-auto-rows: 16px; }
.stack button, .irow button { justify-content: flex-start; gap: 2px; }
.stack.center button { justify-content: center; }
.stack .caret { margin-left: 3px; }
.carets { padding-right: 9px; }
.carets .caret { margin-left: auto; }
.annotation .stack, .block .stack { padding-left: 3px; }
.draw .stack { padding-left: 2px; }
.on { background: #4c7fae; }
.stack .on { background: #35597b; border: 1px solid #6ba6d8; }
.rows { display: grid; grid-template-rows: repeat(3, 16px); align-items: center; }
.irow { display: flex; gap: 4px; }
.combo { display: flex; align-items: center; height: 14px; padding: 0 3px; background: var(--field); }
.layers .combo { padding-left: 1px; gap: 0; margin-left: 1px; }
.layers .combo svg { width: 39px; }
.layers .irow { padding-left: 3px; }
.swatch { flex: none; width: 10px; height: 10px; margin: 0 3px 0 1px; background: #fff; }
.rule { flex: none; width: 43px; height: 1px; margin: 0 2px 0 1px; background: #d5d8dc; }
.wheel { width: 11px; height: 11px; border-radius: 6px; background: conic-gradient(#f29a4a, #e5527a, #9466d6, #4c9cf0, #4cc98a, #e2d84c, #f29a4a); }

/* drawing file tabs */
.files { flex: none; height: 19px; display: flex; align-items: center; padding: 0 8px; background: var(--dark); border-bottom: 2px solid var(--panel); }
.files .slash { margin-left: 3px; }
.start { margin: 0 5px; }
.doc { height: 17px; gap: 5px; padding: 0 5px 0 11px; width: 69px; background: var(--panel); clip-path: polygon(7px 0, 100% 0, 62px 100%, 0 100%); font-weight: 700; color: #fff; }
.add { margin: 0 3px 0 3px; }

/* work area */
.work { flex: 1; min-height: 0; display: flex; margin-top: -1px; background: var(--dark); border-bottom: 2px solid #333c49; }
.palette { flex: none; width: 228px; padding: 2px 11px 0 12px; background: #3d4554; }
.palette h2 { margin: 0 -8px 10px -12px; padding: 0 10px; height: 12px; font: 8px/12px Roboto, sans-serif; background: #2e3540; position: relative; }
.palette h2::before { content: ""; position: absolute; left: 4px; top: 3px; width: 2px; height: 7px; background: #69717d; }
.pick { display: flex; align-items: center; height: 14px; gap: 4px; margin-bottom: 3px; }
.pick .combo { width: 157px; padding: 0 2px; border: 1px solid #586376; margin-right: 1px; flex: none; }
.palette h3 { display: flex; align-items: center; justify-content: space-between; height: 13px; margin: 0; padding: 0 5px 0 4px; font-size: 8px; line-height: 13px; font-weight: 700; color: #f0f2f4; background: var(--line); }
.palette table { width: 193px; margin: 0 0 2px 12px; border-collapse: collapse; table-layout: fixed; }
.palette th, .palette td { padding: 0 3px; height: 12px; line-height: 10px; text-align: left; vertical-align: middle; font-weight: 400; border: 1px solid #333b48; }
.palette th { width: 87px; white-space: nowrap; }
.palette td .swatch, .palette td .rule { display: inline-block; vertical-align: middle; margin-left: 0; }
.palette td .swatch { height: 9px; }
.r7 { height: 89px; }
.r1 { height: 13px; }
.r4 { height: 51px; }
.r5 { height: 64px; }
.r6 { height: 76px; }
.dim { color: #9097a1; }

/* drawing canvas and its overlays */
.canvas { flex: 1; min-width: 0; position: relative; overflow: hidden; background: #222930; }
.drawing { position: absolute; left: 0; top: 0; }
.ucs { position: absolute; left: 8px; bottom: 3px; }
.ucs text { font: 13px Lato, sans-serif; font-weight: 300; fill: #c9cccf; stroke: none; }
.viewhead { position: relative; display: flex; justify-content: space-between; padding: 5px 5px 0 2px; }
.viewhead div { display: flex; gap: 4px; }
.cube { position: absolute; right: 9px; top: 26px; width: 90px; }
.cube text { font: 700 14px "Liberation Sans", sans-serif; fill: #bfc2c5; stroke: none; text-anchor: middle; }
.cube .top { font-size: 9px; fill: #42464d; }
.wcs { width: 32px; height: 12px; margin: 13px 0 0 29px; border-radius: 3px; background: #8f929b; color: #c9ccd3; gap: 3px; }
.navbar { position: absolute; right: 1px; top: 157px; border-radius: 3px; background: #686c70; stroke: #44494e; }
.command { position: absolute; left: 213px; right: 213px; bottom: 1px; font: 8px/10px "Liberation Mono", monospace; }
.command ul { margin: 0 0 3px 43px; padding: 0; list-style: none; display: flex; flex-direction: column; align-items: flex-start; gap: 3px; }
.command li { padding: 0 1px; white-space: nowrap; background: #52585b; color: #e4e6e8; }
.command li:first-child { color: #b4b8bb; }
.cmdbar { display: flex; align-items: center; height: 16px; background: #2a3039; }
.cmdbar .grip { margin: 0 4px 0 2px; }
.cmdbar > button { margin-right: 6px; }
.cmdbar > button + button { margin: 0 3px 0 0; }
.entry { flex: 1; height: 16px; display: flex; align-items: center; gap: 1px; padding: 0 2px; background: #bbbfbe; color: #50565a; }
.entry svg { stroke: #4b5156; }
.entry .caret:not(.up) { border-top-color: #4b5156; }
.entry input { flex: 1; min-width: 0; margin-left: 3px; font-style: italic; }
.entry input::placeholder { color: #5a6064; opacity: 1; }

/* status bar */
.status { flex: none; height: 20px; display: flex; justify-content: space-between; align-items: center; background: var(--dark); }
.layouts { display: flex; align-items: center; padding: 0 8px 2px; }
.layouts .model { width: 45px; height: 16px; margin: 0 5px 0 4px; background: var(--panel); clip-path: polygon(6px 0, 100% 0, 39px 100%, 0 100%); font-weight: 700; color: #fff; }
.layouts svg { margin: 0 4px 0 5px; }
.layouts .ic svg { margin: 0; }
.toggles { display: flex; gap: 2px; }
.toggles button { width: 16px; height: 15px; }
.toggles .text { width: 32px; background: #2f3743; }
.set { display: flex; background: #2f3743; }
.toggles .c { width: 10px; }
.toggles .scale { width: 22px; gap: 3px; }
.toggles .on + .on { margin-left: 1px; }
```
